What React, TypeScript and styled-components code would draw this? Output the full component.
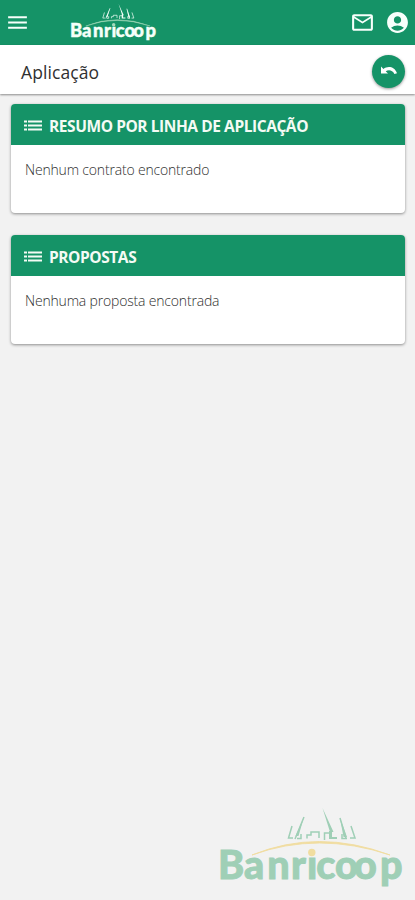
import React from "react";
import styled, { createGlobalStyle } from "styled-components";
import { MdMenu, MdMailOutline, MdAccountCircle } from "react-icons/md";

const GlobalStyle = createGlobalStyle`
  * { box-sizing: border-box; }
  body { margin: 0; background: #f2f2f2; font-family: "Open Sans", "Noto Sans", sans-serif; }
`;

const Page = styled.div`
  height: 900px;
  display: flex;
  flex-direction: column;
  overflow: hidden;
  background: #f2f2f2;
`;

const TopBar = styled.header`
  height: 45px;
  flex: none;
  display: flex;
  align-items: center;
  padding: 0 5px;
  background: #159367;
  color: #f7fffb;
`;

const IconButton = styled.button<{ $gap?: number }>`
  display: flex;
  border: 0;
  padding: 0;
  margin-left: ${({ $gap = 0 }) => $gap}px;
  background: none;
  color: inherit;
`;

const BrandSlot = styled.div`
  display: flex;
  flex: 1;
  padding-left: 36px;
`;

const TitleBar = styled.div`
  height: 49px;
  flex: none;
  display: flex;
  align-items: center;
  justify-content: space-between;
  padding: 4px 10px 0 21px;
  background: #fff;
  box-shadow: 0 1px 2px rgba(0, 0, 0, 0.42);
`;

const Title = styled.h1`
  margin: 0;
  font-size: 17.5px;
  line-height: 24px;
  font-weight: 400;
  letter-spacing: 0.1px;
  color: #303030;
`;

const BackButton = styled.button`
  width: 33px;
  height: 33px;
  margin-top: -1px;
  border: 0;
  padding: 0;
  border-radius: 50%;
  display: flex;
  align-items: center;
  justify-content: center;
  color: #fff;
  background: #159367;
  box-shadow: 0 1px 3px rgba(0, 0, 0, 0.42);
`;

const Content = styled.main`
  flex: 1;
  display: flex;
  flex-direction: column;
  gap: 22px;
  padding: 10px 10px 0 11px;
`;

const Card = styled.section`
  height: 109px;
  border-radius: 4px;
  overflow: hidden;
  background: #fff;
  box-shadow: 0 1px 3px rgba(0, 0, 0, 0.42);
`;

const CardHeader = styled.header`
  height: 41px;
  display: flex;
  align-items: center;
  gap: 6px;
  padding: 2px 12px 0;
  color: #f4fbf5;
  background: #159367;
`;

const CardTitle = styled.h2`
  margin: 0;
  font-size: 15.5px;
  line-height: 20px;
  font-weight: 700;
  letter-spacing: -0.43px;
  white-space: nowrap;
`;

const CardText = styled.p`
  margin: 0;
  padding: 15px 14px;
  font-size: 14px;
  line-height: 20px;
  font-weight: 300;
  letter-spacing: -0.18px;
  color: #303030;
`;

const Footer = styled.footer`
  flex: none;
  display: flex;
  justify-content: flex-end;
  height: 105px;
`;

type LogoProps = { width: number; height: number; ink: string; accent: string };

function Logo({ width, height, ink, accent }: LogoProps) {
  return (
    <svg width={width} height={height} viewBox="0 0 205 105" aria-label="Banricoop">
      <path d="M42 60Q108 33 180 60Q108 36 42 60Z" fill={accent} stroke={accent} strokeWidth="0.9" />
      <g fill="none" stroke={ink} strokeWidth="1.5">
        <path d="M82 31L78.5 43H83M85 44L94 22M87 43.5H91V39M97 43.5V40H101V37H109V43M114.5 45V38H121M130 23L136 43M132 39V43.5H137M141 31L145 43H140" />
      </g>
      <path d="M112.5 13L123.5 37H120ZM94 22L88.5 41H85.5ZM130 23L137 42H133.5ZM119 36H122V42H127V44H119Z" fill={ink} />
      <text
        x="8 34 57.3 81 97 106.3 125 144 170"
        y="84"
        fill={ink}
        stroke={ink}
        strokeWidth="0.9"
        fontFamily="Lato, sans-serif"
        fontSize="39.5"
        fontWeight="900"
      >
        Banrıcoop
      </text>
      <circle cx="101.8" cy="57.5" r="3.7" fill={accent} />
    </svg>
  );
}

function ListIcon() {
  return (
    <svg width="20" height="14" viewBox="0 0 20 14" fill="currentColor" aria-hidden="true">
      <path d="M1 1.5h3v2H1zM5 1.5h14v2H5zM1 5.5h3v2H1zM5 5.5h14v2H5zM1 9.5h3v2H1zM5 9.5h14v2H5z" />
    </svg>
  );
}

const panels = [
  { title: "RESUMO POR LINHA DE APLICAÇÃO", text: "Nenhum contrato encontrado" },
  { title: "PROPOSTAS", text: "Nenhuma proposta encontrada" },
];

export default function App() {
  return (
    <Page>
      <GlobalStyle />
      <TopBar>
        <IconButton aria-label="Menu"><MdMenu size={25} /></IconButton>
        <BrandSlot><Logo width={96} height={49} ink="#f5fff9" accent="#a5dabb" /></BrandSlot>
        <IconButton aria-label="Mensagens"><MdMailOutline size={25} /></IconButton>
        <IconButton aria-label="Conta" $gap={10}><MdAccountCircle size={25} /></IconButton>
      </TopBar>
      <TitleBar>
        <Title>Aplicação</Title>
        <BackButton aria-label="Voltar">
          <svg width="18" height="12" viewBox="0 0 18 12">
            <path d="M1 1.5L3.5 3.9C7.3 .9 14.5 1 17 8.3L14.4 9C12.6 4.9 8.5 4.3 5.7 6.2L8 8.6H1Z" fill="currentColor" />
          </svg>
        </BackButton>
      </TitleBar>
      <Content>
        {panels.map((panel) => (
          <Card key={panel.title}>
            <CardHeader>
              <ListIcon />
              <CardTitle>{panel.title}</CardTitle>
            </CardHeader>
            <CardText>{panel.text}</CardText>
          </Card>
        ))}
      </Content>
      <Footer><Logo width={205} height={105} ink="#9fcfb6" accent="#f0dda0" /></Footer>
    </Page>
  );
}
